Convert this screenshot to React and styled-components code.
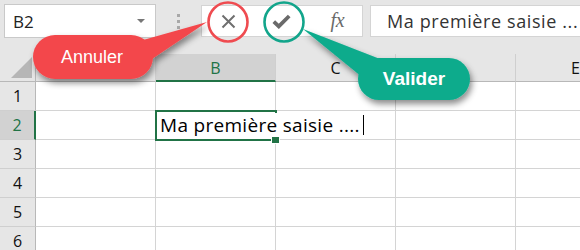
import React from "react";
import styled, { createGlobalStyle } from "styled-components";

const Global = createGlobalStyle`
  html, body { margin: 0; padding: 0; background: #fff; }
  * { box-sizing: border-box; }
`;

const GREEN = "#217346";
const GRID = "#d4d4d4";

const Page = styled.div`
  position: relative;
  width: 580px;
  height: 250px;
  overflow: hidden;
  background: #fff;
  font-family: "Open Sans", "Noto Sans", sans-serif;
`;

const TopArea = styled.div`
  display: flex;
  align-items: flex-start;
  height: 54px;
  padding: 4px 0 0 4px;
  background: #e6e6e6;
`;

const NameBox = styled.div`
  width: 152px;
  height: 34px;
  display: flex;
  align-items: center;
  justify-content: space-between;
  padding: 0 10px 0 8px;
  background: #fff;
  border: 1px solid #c9c9c9;
  font-size: 17px;
  color: #222;
`;

const DropArrow = styled.span`
  width: 0;
  height: 0;
  border-left: 4px solid transparent;
  border-right: 4px solid transparent;
  border-top: 4px solid #777;
`;

const Grip = styled.div`
  width: 45px;
  display: flex;
  flex-direction: column;
  align-items: center;
  gap: 3px;
  padding-top: 10px;
`;

const Dot = styled.span`
  width: 3px;
  height: 3px;
  background: #a8a8a8;
`;

const ButtonBox = styled.div`
  width: 162px;
  height: 32px;
  margin-top: 1px;
  display: flex;
  background: #fff;
  border: 1px solid #d4d4d4;
`;

const IconSlot = styled.div`
  width: 54px;
  display: flex;
  align-items: center;
  justify-content: center;
`;

const Fx = styled.span`
  font-family: "Liberation Serif", serif;
  font-style: italic;
  font-size: 20px;
  color: #6a6a6a;
  letter-spacing: -0.5px;
  padding-left: 4px;
  padding-bottom: 2px;
`;

const FormulaInput = styled.div`
  flex: 1;
  height: 32px;
  margin-top: 1px;
  margin-left: 7px;
  padding-left: 16px;
  display: flex;
  align-items: center;
  background: #fff;
  border: 1px solid #d4d4d4;
  border-right: none;
  white-space: nowrap;
  overflow: hidden;
  font-size: 18px;
  letter-spacing: 0.6px;
  color: #333;
`;

const Sheet = styled.div`
  display: grid;
  grid-template-columns: 36px repeat(5, 120px);
  grid-template-rows: 28px;
  grid-auto-rows: 29px;
  width: 636px;
  font-family: "Open Sans", "Noto Sans", sans-serif;
`;

const Corner = styled.div`
  background: #e6e6e6;
  border-right: 1px solid #b8b8b8;
  border-bottom: 1px solid #b8b8b8;
  display: flex;
  align-items: flex-end;
  justify-content: flex-end;
  padding: 0 3px 3px 0;
`;

const CornerTriangle = styled.span`
  width: 0;
  height: 0;
  border-left: 21px solid transparent;
  border-bottom: 21px solid #b6b6b6;
`;

const ColHead = styled.div`
  display: flex;
  align-items: center;
  justify-content: center;
  background: ${(p) => (p.$active ? "#d2d2d2" : "#e6e6e6")};
  border-right: 1px solid #cfcfcf;
  border-bottom: ${(p) => (p.$active ? `2px solid ${GREEN}` : "1px solid #b8b8b8")};
  color: ${(p) => (p.$active ? GREEN : "#111")};
  font-size: 16px;
  padding-top: ${(p) => (p.$active ? "1px" : "0")};
`;

const RowHead = styled.div`
  display: flex;
  align-items: center;
  justify-content: center;
  background: ${(p) => (p.$active ? "#d2d2d2" : "#e6e6e6")};
  border-right: ${(p) => (p.$active ? `2px solid ${GREEN}` : "1px solid #b8b8b8")};
  border-bottom: 1px solid #cfcfcf;
  color: ${(p) => (p.$active ? GREEN : "#111")};
  font-size: 16px;
`;

const Cell = styled.div`
  position: relative;
  border-right: 1px solid ${GRID};
  border-bottom: 1px solid ${GRID};
  background: #fff;
  ${(p) =>
    p.$selected &&
    `
    z-index: 2;
    &::after {
      content: "";
      position: absolute;
      left: -1px; top: -1px; right: -2px; bottom: -2px;
      border: 2px solid ${GREEN};
      pointer-events: none;
    }
    &::before {
      content: "";
      position: absolute;
      right: -5px; bottom: -5px;
      width: 7px; height: 7px;
      background: ${GREEN};
      border: 1px solid #fff;
      z-index: 3;
    }
  `}
`;

const CellText = styled.span`
  position: absolute;
  left: 3px;
  top: 2px;
  bottom: 2px;
  padding-left: 1px;
  padding-right: 2px;
  display: flex;
  align-items: center;
  white-space: nowrap;
  background: #fff;
  font-size: 19px;
  letter-spacing: 0.3px;
  color: #000;
  z-index: 4;
`;

const Caret = styled.span`
  display: inline-block;
  width: 1px;
  height: 20px;
  margin-left: 3px;
  background: #000;
`;

const Overlay = styled.svg`
  position: absolute;
  left: 0;
  top: 0;
  pointer-events: none;
  z-index: 10;
`;

const Label = styled.div`
  position: absolute;
  z-index: 11;
  left: ${(p) => p.$x}px;
  top: ${(p) => p.$y}px;
  width: ${(p) => p.$w}px;
  height: ${(p) => p.$h}px;
  display: flex;
  align-items: center;
  justify-content: center;
  color: #fff;
  font-family: "Liberation Sans", Arial, sans-serif;
  font-size: ${(p) => p.$size}px;
  font-weight: ${(p) => (p.$bold ? 700 : 400)};
`;

const cols = ["A", "B", "C", "D", "E"];
const rows = [1, 2, 3, 4, 5, 6];

export default function App() {
  return (
    <Page>
      <Global />
      <TopArea>
        <NameBox>
          <span>B2</span>
          <DropArrow />
        </NameBox>
        <Grip>
          <Dot />
          <Dot />
          <Dot />
        </Grip>
        <ButtonBox>
          <IconSlot>
            <svg width="15" height="15" viewBox="0 0 15 15">
              <path d="M1.5 1.5 L13.5 13.5 M13.5 1.5 L1.5 13.5" stroke="#6f6f6f" strokeWidth="2" fill="none" />
            </svg>
          </IconSlot>
          <IconSlot>
            <svg width="19" height="15" viewBox="0 0 19 15">
              <path d="M1.8 7.6 L6.8 12.4 L17.2 2" stroke="#6a6a6a" strokeWidth="3.8" fill="none" strokeLinejoin="miter" />
            </svg>
          </IconSlot>
          <IconSlot>
            <Fx>fx</Fx>
          </IconSlot>
        </ButtonBox>
        <FormulaInput>Ma première saisie ...</FormulaInput>
      </TopArea>

      <Sheet>
        <Corner>
          <CornerTriangle />
        </Corner>
        {cols.map((c) => (
          <ColHead key={c} $active={c === "B"}>
            {c}
          </ColHead>
        ))}
        {rows.map((r) => (
          <React.Fragment key={r}>
            <RowHead $active={r === 2}>{r}</RowHead>
            {cols.map((c) => {
              const sel = r === 2 && c === "B";
              return (
                <Cell key={c} $selected={sel}>
                  {sel && (
                    <CellText>
                      Ma première saisie ....
                      <Caret />
                    </CellText>
                  )}
                </Cell>
              );
            })}
          </React.Fragment>
        ))}
      </Sheet>

      <Overlay width="580" height="250" viewBox="0 0 580 250">
        <defs>
          <filter id="sh" x="-20%" y="-30%" width="140%" height="180%">
            <feDropShadow dx="2" dy="4" stdDeviation="3" floodColor="#000" floodOpacity="0.45" />
          </filter>
        </defs>
        <circle cx="228" cy="22" r="19.5" fill="none" stroke="#ef4b50" strokeWidth="2.6" />
        <circle cx="284" cy="22" r="19.5" fill="none" stroke="#12a58b" strokeWidth="2.6" />
        <g filter="url(#sh)" fill="#f3474b">
          <rect x="33" y="35" width="120" height="44" rx="22" />
          <polygon points="136,42 207,22 152,59" />
        </g>
        <g filter="url(#sh)" fill="#0aab8c">
          <rect x="358" y="58" width="112" height="42" rx="21" />
          <polygon points="303,29 380,59 362,77" />
        </g>
      </Overlay>
      <Label $x={33} $y={35} $w={118} $h={44} $size={18}>
        Annuler
      </Label>
      <Label $x={358} $y={58} $w={112} $h={42} $size={19} $bold>
        Valider
      </Label>
    </Page>
  );
}
